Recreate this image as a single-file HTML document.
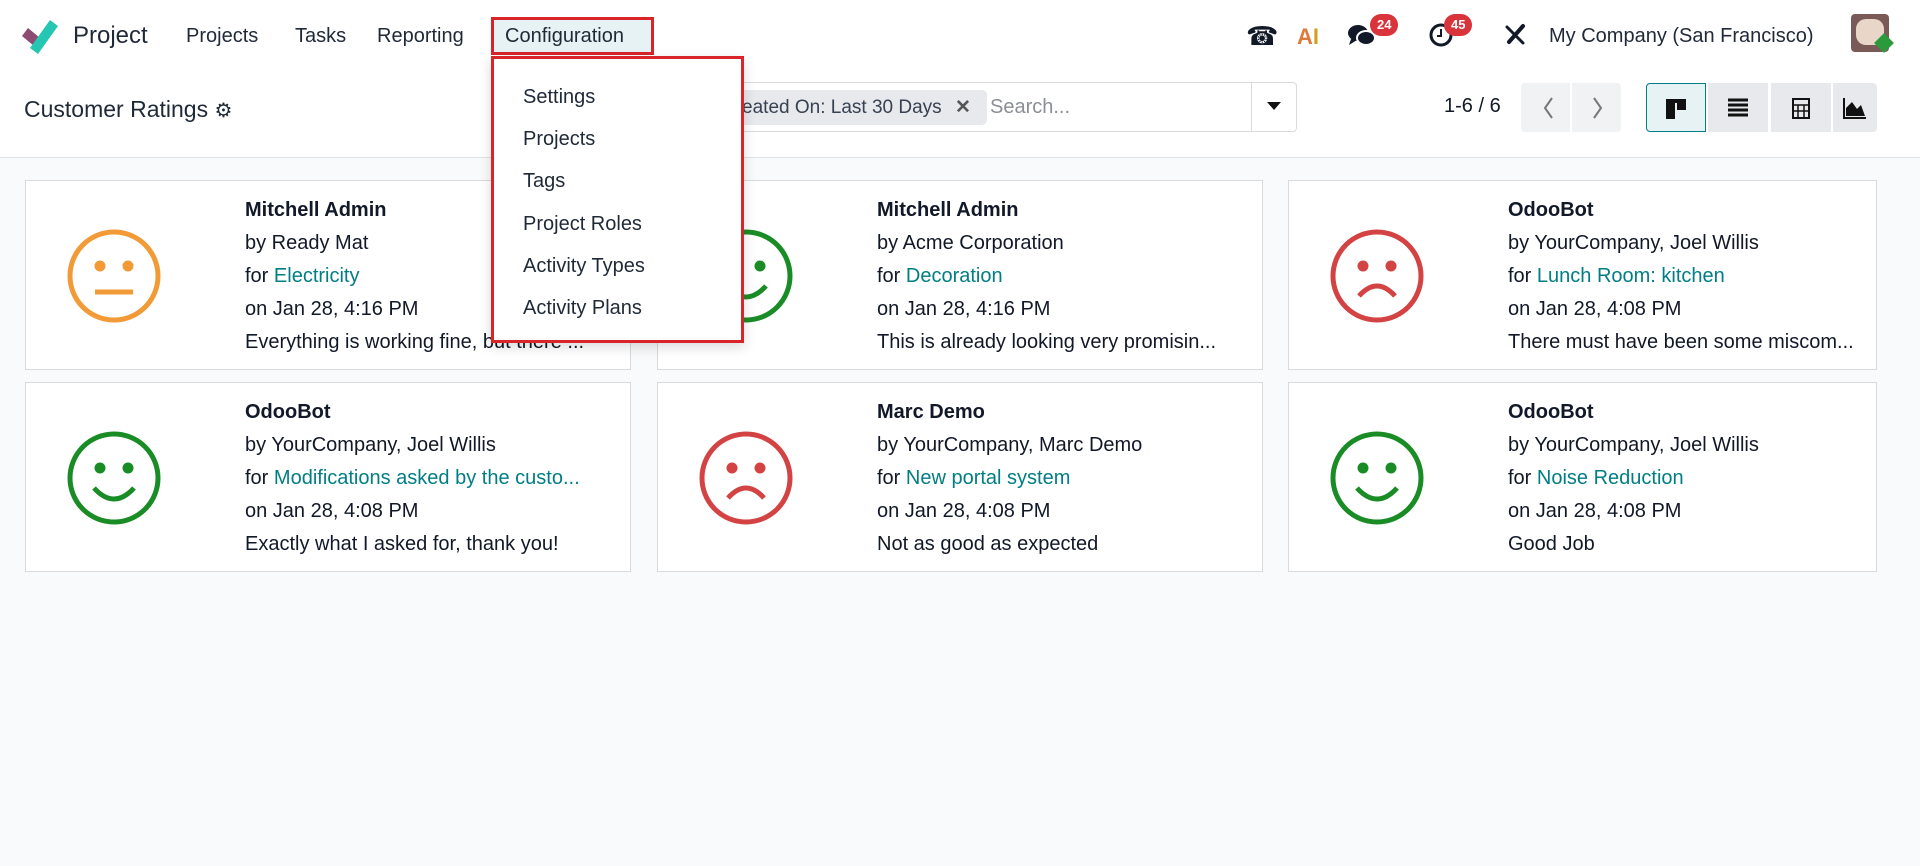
<!DOCTYPE html>
<html><head><meta charset="utf-8"><style>
*{box-sizing:border-box;margin:0;padding:0}
body{width:1920px;height:866px;overflow:hidden;background:#f9fafb;font-family:"Liberation Sans",sans-serif;color:#111827;position:relative}
.a{position:absolute;white-space:nowrap}
.hdr{position:absolute;left:0;top:0;width:1920px;height:158px;background:#fff;border-bottom:1px solid #dee2e6}
.nav{font-size:20px;color:#1f2937;top:25px}
.card{position:absolute;width:606px;height:190px;background:#fff;border:1px solid #d8dadd}
.card .t{position:absolute;left:219px;font-size:20px;line-height:33px;top:13px;width:375px;overflow:hidden}
.card .t div{white-space:nowrap;overflow:hidden;text-overflow:ellipsis}
.card svg{position:absolute;left:40px;top:47px}
b{font-weight:bold}
.l{color:#017e84}
.dd{position:absolute;left:491px;top:56px;width:253px;height:287px;background:#fff;border:3px solid #d9242a;box-shadow:0 4px 12px rgba(0,0,0,.15)}
.dd div{position:absolute;left:29px;font-size:20px;color:#1f2937}
.vb{position:absolute;top:83px;height:49px;width:60px;background:#e7e9ed;display:flex;align-items:center;justify-content:center}
.badge{position:absolute;background:#d9333b;color:#fff;font-size:13px;font-weight:bold;border-radius:12px;height:22px;padding:0 7px;line-height:22px}
</style></head><body>
<div class="hdr"></div>
<svg class="a" style="left:20px;top:16px" width="42" height="38" viewBox="0 0 42 38"><path d="M2 20 L14 30 L20 22 L8 12Z" fill="#8d4a72"/><path d="M10 32 L30 4 L38 10 L18 38Z" fill="#26c7b2"/></svg>
<div class="a" style="left:73px;top:22px;font-size:24px;color:#1f2937">Project</div>
<div class="a nav" style="left:186px">Projects</div>
<div class="a nav" style="left:295px">Tasks</div>
<div class="a nav" style="left:377px">Reporting</div>
<div class="a" style="left:491px;top:17px;width:163px;height:38px;background:#e6f2f3;border:3px solid #d9242a"></div>
<div class="a nav" style="left:505px">Configuration</div>
<div class="a" style="left:1246px;top:21px;font-size:26px">☎</div>
<div class="a" style="left:1297px;top:24px;font-size:22px;font-weight:bold;color:#e07a3a">A<span style="color:#d4a020">I</span></div>
<svg class="a" style="left:1347px;top:23px" width="30" height="26" viewBox="0 0 30 26"><ellipse cx="11" cy="10" rx="10" ry="8" fill="#111827"/><path d="M4 16 L2 22 L10 17Z" fill="#111827"/><ellipse cx="19" cy="15" rx="9" ry="7" fill="#111827" stroke="#fff" stroke-width="2"/></svg>
<div class="badge" style="left:1370px;top:14px">24</div>
<svg class="a" style="left:1428px;top:22px" width="26" height="26" viewBox="0 0 26 26"><circle cx="13" cy="13" r="10" fill="none" stroke="#111827" stroke-width="3"/><path d="M13 7v7h-4" stroke="#111827" stroke-width="2" fill="none"/></svg>
<div class="badge" style="left:1444px;top:14px">45</div>
<svg class="a" style="left:1502px;top:22px" width="26" height="26" viewBox="0 0 26 26"><path d="M5 5 L21 21" stroke="#111827" stroke-width="3" stroke-linecap="round"/><path d="M21 4 L7 20" stroke="#111827" stroke-width="4" stroke-linecap="round"/></svg>
<div class="a nav" style="left:1549px">My Company (San Francisco)</div>
<div class="a" style="left:1851px;top:14px;width:38px;height:38px;border-radius:4px;background:#7a5a56"></div>
<div class="a" style="left:1856px;top:19px;width:28px;height:26px;border-radius:10px;background:#e8d6c8"></div>
<div class="a" style="left:1877px;top:36px;width:14px;height:14px;background:#2b9a3c;transform:rotate(45deg)"></div>
<div class="a" style="left:24px;top:96px;font-size:23px;color:#1f2937">Customer Ratings <span style="font-size:20px">⚙</span></div>
<div class="a" style="left:700px;top:82px;width:597px;height:50px;border:1px solid #d8dadd;border-radius:4px;background:#fff"></div>
<div class="a" style="left:700px;top:90px;width:287px;height:35px;background:#e7e9ed;border-radius:5px"></div>
<div class="a" style="left:722px;top:96px;font-size:19px;color:#374151">Created On: Last 30 Days <span style="font-weight:bold;color:#555;margin-left:8px">✕</span></div>
<div class="a" style="left:990px;top:96px;font-size:20px;color:#8a8f96">Search...</div>
<div class="a" style="left:1251px;top:83px;width:1px;height:48px;background:#d8dadd"></div>
<div class="a" style="left:1267px;top:102px;width:0;height:0;border-left:7px solid transparent;border-right:7px solid transparent;border-top:8px solid #111"></div>
<div class="a" style="left:1444px;top:95px;font-size:20px">1-6 / 6</div>
<div class="a" style="left:1521px;top:83px;width:100px;height:49px;background:#f1f2f4;border-radius:4px"></div>
<div class="a" style="left:1570px;top:83px;width:2px;height:49px;background:#fff"></div>
<svg class="a" style="left:1538px;top:94px" width="70" height="28"><path d="M14 4 L7 14 L14 24 M56 4 L63 14 L56 24" stroke="#777" stroke-width="2" fill="none"/></svg>
<div class="vb" style="left:1646px;background:#e6f2f3;border:1px solid #017e84;border-radius:4px 0 0 4px"><svg width="24" height="24"><rect x="2" y="3" width="20" height="4" fill="#111"/><rect x="2" y="3" width="9" height="20" fill="#111"/><rect x="13" y="3" width="9" height="11" fill="#111"/></svg></div>
<div class="vb" style="left:1708px"><svg width="24" height="24"><path d="M2 4h20M2 9h20M2 14h20M2 19h20" stroke="#111" stroke-width="3"/></svg></div>
<div class="vb" style="left:1771px"><svg width="24" height="24"><rect x="4" y="3" width="16" height="19" fill="none" stroke="#111" stroke-width="2"/><path d="M4 9h16M4 15h16M9 9v13M15 9v13" stroke="#111" stroke-width="1.5"/></svg></div>
<div class="vb" style="left:1833px;width:44px;border-radius:0 4px 4px 0"><svg width="26" height="24"><path d="M2 2v20h22" stroke="#111" stroke-width="2" fill="none"/><path d="M4 20 L4 12 L10 6 L15 13 L19 9 L23 20Z" fill="#111"/></svg></div>
<div class="card" style="left:25px;top:180px"><svg width="96" height="96" viewBox="0 0 96 96"><circle cx="48" cy="48" r="44" fill="none" stroke="#f29a36" stroke-width="5"/><circle cx="34" cy="38" r="5.5" fill="#f29a36"/><circle cx="62" cy="38" r="5.5" fill="#f29a36"/><path d="M29 64h38" stroke="#f29a36" stroke-width="5"/></svg><div class="t"><div><b>Mitchell Admin</b></div><div>by Ready Mat</div><div>for <span class="l">Electricity</span></div><div>on Jan 28, 4:16 PM</div><div>Everything is working fine, but there ...</div></div></div>
<div class="card" style="left:657px;top:180px"><svg width="96" height="96" viewBox="0 0 96 96"><circle cx="48" cy="48" r="44" fill="none" stroke="#1a8c26" stroke-width="5"/><circle cx="34" cy="38" r="5.5" fill="#1a8c26"/><circle cx="62" cy="38" r="5.5" fill="#1a8c26"/><path d="M28 58 Q48 80 68 58" stroke="#1a8c26" stroke-width="5" fill="none"/></svg><div class="t"><div><b>Mitchell Admin</b></div><div>by Acme Corporation</div><div>for <span class="l">Decoration</span></div><div>on Jan 28, 4:16 PM</div><div>This is already looking very promisin...</div></div></div>
<div class="card" style="left:1288px;top:180px;width:589px"><svg width="96" height="96" viewBox="0 0 96 96"><circle cx="48" cy="48" r="44" fill="none" stroke="#d44343" stroke-width="5"/><circle cx="34" cy="38" r="5.5" fill="#d44343"/><circle cx="62" cy="38" r="5.5" fill="#d44343"/><path d="M30 68 Q48 48 66 68" stroke="#d44343" stroke-width="5" fill="none"/></svg><div class="t" style="width:360px"><div><b>OdooBot</b></div><div>by YourCompany, Joel Willis</div><div>for <span class="l">Lunch Room: kitchen</span></div><div>on Jan 28, 4:08 PM</div><div>There must have been some miscom...</div></div></div>
<div class="card" style="left:25px;top:382px"><svg width="96" height="96" viewBox="0 0 96 96"><circle cx="48" cy="48" r="44" fill="none" stroke="#1a8c26" stroke-width="5"/><circle cx="34" cy="38" r="5.5" fill="#1a8c26"/><circle cx="62" cy="38" r="5.5" fill="#1a8c26"/><path d="M28 58 Q48 80 68 58" stroke="#1a8c26" stroke-width="5" fill="none"/></svg><div class="t"><div><b>OdooBot</b></div><div>by YourCompany, Joel Willis</div><div>for <span class="l">Modifications asked by the custo...</span></div><div>on Jan 28, 4:08 PM</div><div>Exactly what I asked for, thank you!</div></div></div>
<div class="card" style="left:657px;top:382px"><svg width="96" height="96" viewBox="0 0 96 96"><circle cx="48" cy="48" r="44" fill="none" stroke="#d44343" stroke-width="5"/><circle cx="34" cy="38" r="5.5" fill="#d44343"/><circle cx="62" cy="38" r="5.5" fill="#d44343"/><path d="M30 68 Q48 48 66 68" stroke="#d44343" stroke-width="5" fill="none"/></svg><div class="t"><div><b>Marc Demo</b></div><div>by YourCompany, Marc Demo</div><div>for <span class="l">New portal system</span></div><div>on Jan 28, 4:08 PM</div><div>Not as good as expected</div></div></div>
<div class="card" style="left:1288px;top:382px;width:589px"><svg width="96" height="96" viewBox="0 0 96 96"><circle cx="48" cy="48" r="44" fill="none" stroke="#1a8c26" stroke-width="5"/><circle cx="34" cy="38" r="5.5" fill="#1a8c26"/><circle cx="62" cy="38" r="5.5" fill="#1a8c26"/><path d="M28 58 Q48 80 68 58" stroke="#1a8c26" stroke-width="5" fill="none"/></svg><div class="t"><div><b>OdooBot</b></div><div>by YourCompany, Joel Willis</div><div>for <span class="l">Noise Reduction</span></div><div>on Jan 28, 4:08 PM</div><div>Good Job</div></div></div>
<div class="dd">
<div style="top:27px">Settings</div>
<div style="top:69px">Projects</div>
<div style="top:111px">Tags</div>
<div style="top:154px">Project Roles</div>
<div style="top:196px">Activity Types</div>
<div style="top:238px">Activity Plans</div>
</div>
</body></html>
